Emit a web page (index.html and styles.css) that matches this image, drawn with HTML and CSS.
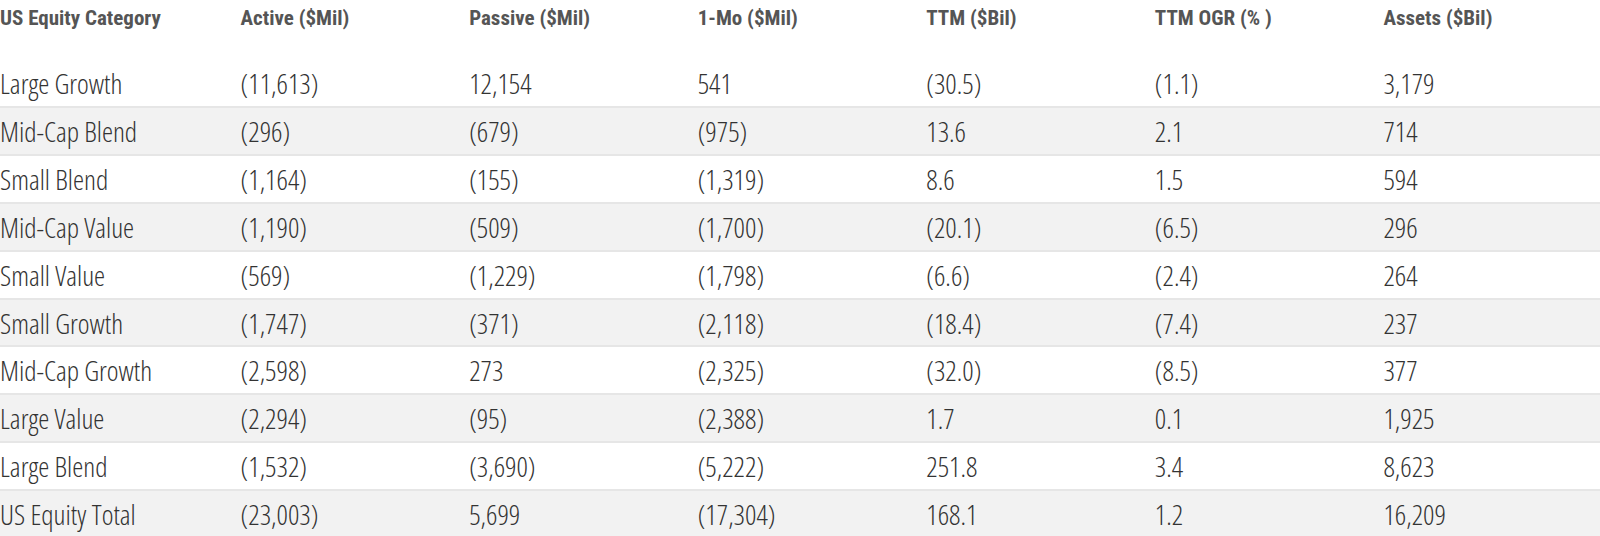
FILE: index.html
```html
<!DOCTYPE html>
<html lang="en">
<head>
<meta charset="utf-8">
<title>US Equity Category Flows</title>
<link rel="stylesheet" href="styles.css">
</head>
<body>
<div class="flows">
  <div class="row head">
    <div class="cell">US Equity Category</div>
    <div class="cell">Active ($Mil)</div>
    <div class="cell">Passive ($Mil)</div>
    <div class="cell">1-Mo ($Mil)</div>
    <div class="cell">TTM ($Bil)</div>
    <div class="cell">TTM OGR (% )</div>
    <div class="cell">Assets ($Bil)</div>
  </div>
  <div class="row first">
    <div class="cell">Large Growth</div><div class="cell">(11,613)</div><div class="cell">12,154</div><div class="cell">541</div><div class="cell">(30.5)</div><div class="cell">(1.1)</div><div class="cell">3,179</div>
  </div>
  <div class="row alt">
    <div class="cell">Mid-Cap Blend</div><div class="cell">(296)</div><div class="cell">(679)</div><div class="cell">(975)</div><div class="cell">13.6</div><div class="cell">2.1</div><div class="cell">714</div>
  </div>
  <div class="row">
    <div class="cell">Small Blend</div><div class="cell">(1,164)</div><div class="cell">(155)</div><div class="cell">(1,319)</div><div class="cell">8.6</div><div class="cell">1.5</div><div class="cell">594</div>
  </div>
  <div class="row alt">
    <div class="cell">Mid-Cap Value</div><div class="cell">(1,190)</div><div class="cell">(509)</div><div class="cell">(1,700)</div><div class="cell">(20.1)</div><div class="cell">(6.5)</div><div class="cell">296</div>
  </div>
  <div class="row">
    <div class="cell">Small Value</div><div class="cell">(569)</div><div class="cell">(1,229)</div><div class="cell">(1,798)</div><div class="cell">(6.6)</div><div class="cell">(2.4)</div><div class="cell">264</div>
  </div>
  <div class="row alt">
    <div class="cell">Small Growth</div><div class="cell">(1,747)</div><div class="cell">(371)</div><div class="cell">(2,118)</div><div class="cell">(18.4)</div><div class="cell">(7.4)</div><div class="cell">237</div>
  </div>
  <div class="row">
    <div class="cell">Mid-Cap Growth</div><div class="cell">(2,598)</div><div class="cell">273</div><div class="cell">(2,325)</div><div class="cell">(32.0)</div><div class="cell">(8.5)</div><div class="cell">377</div>
  </div>
  <div class="row alt">
    <div class="cell">Large Value</div><div class="cell">(2,294)</div><div class="cell">(95)</div><div class="cell">(2,388)</div><div class="cell">1.7</div><div class="cell">0.1</div><div class="cell">1,925</div>
  </div>
  <div class="row">
    <div class="cell">Large Blend</div><div class="cell">(1,532)</div><div class="cell">(3,690)</div><div class="cell">(5,222)</div><div class="cell">251.8</div><div class="cell">3.4</div><div class="cell">8,623</div>
  </div>
  <div class="row alt">
    <div class="cell">US Equity Total</div><div class="cell">(23,003)</div><div class="cell">5,699</div><div class="cell">(17,304)</div><div class="cell">168.1</div><div class="cell">1.2</div><div class="cell">16,209</div>
  </div>
</div>
</body>
</html>
```
FILE: styles.css
```css
html, body {
  margin: 0;
  padding: 0;
  background: #ffffff;
}

.flows {
  width: 1600px;
  font-family: "Open Sans", "Liberation Sans", sans-serif;
  font-stretch: 79%;
  font-weight: 300;
  font-size: 28px;
  color: #333333;
}

.row {
  display: grid;
  grid-template-columns: repeat(7, 1fr);
  height: 47.875px;
  box-sizing: border-box;
  border-top: 2px solid #e6e6e6;
  line-height: 46px;
  white-space: nowrap;
}

.cell {
  padding-left: 12px;
}

.cell:first-child {
  padding-left: 0;
}

.row.alt {
  background: #f2f2f2;
}

.row.head {
  height: 47px;
  border-top: 0;
  font-family: Roboto, "Liberation Sans", sans-serif;
  font-stretch: 85%;
  font-weight: 700;
  font-size: 21px;
  line-height: 24px;
  padding-top: 6px;
  color: #555555;
}

.row.first {
  height: 59px;
  border-top-color: #ffffff;
  padding-top: 11px;
}
```
